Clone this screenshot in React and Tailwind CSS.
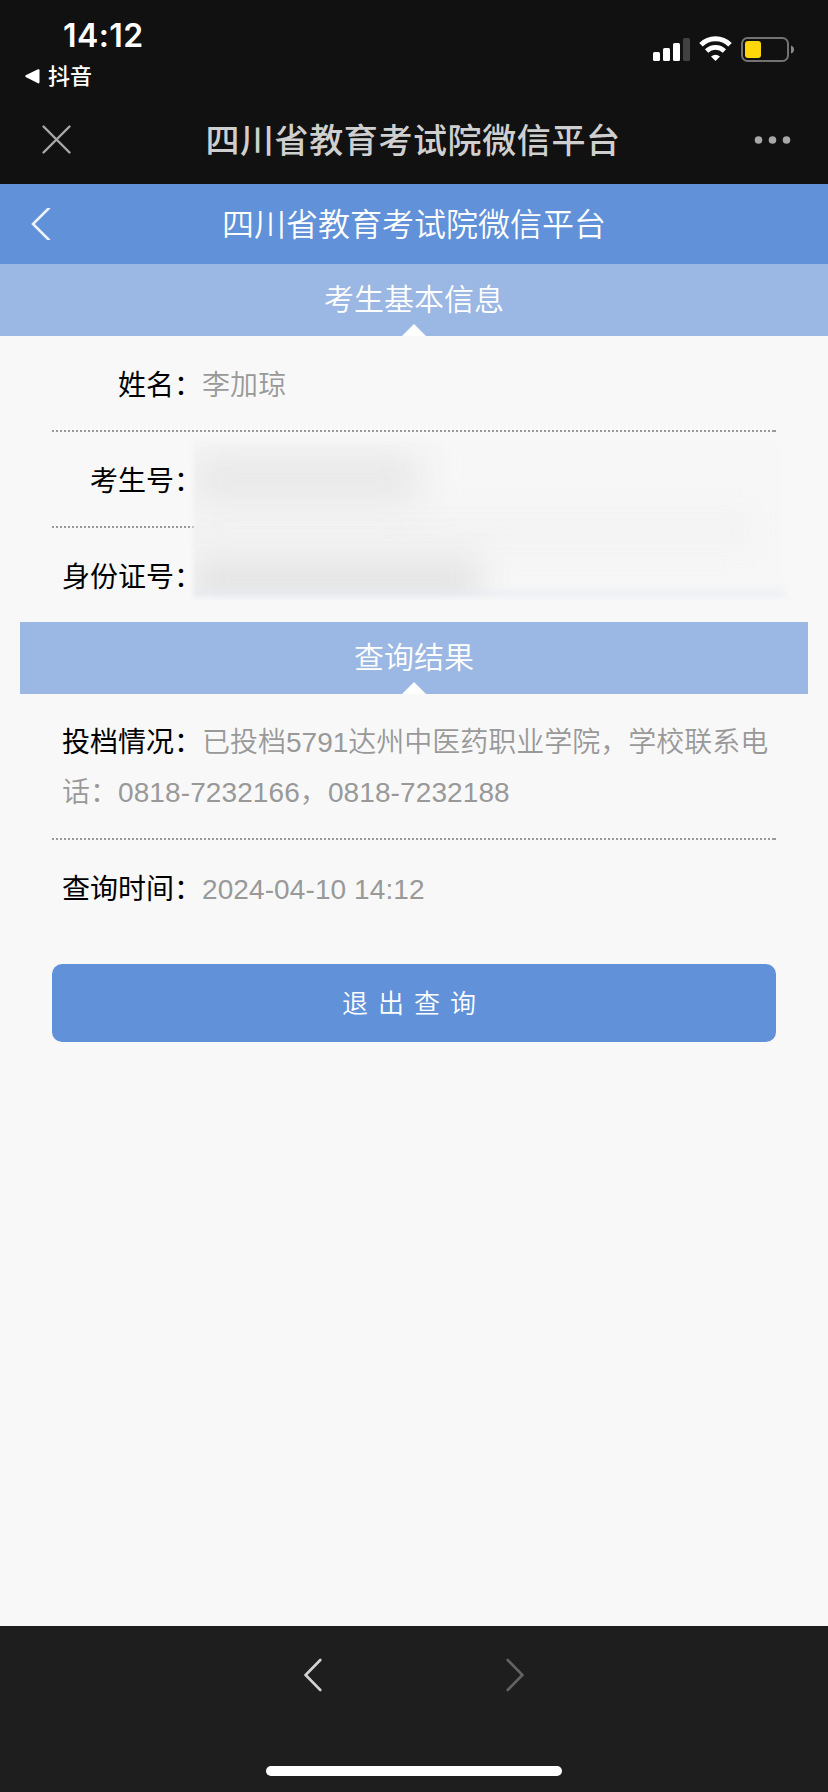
const SANS = "font-['Liberation_Sans','Noto_Sans_CJK_SC',sans-serif]";

function StatusBar() {
  return (
    <div className="flex h-[96px] justify-between bg-[#111111] text-white">
      <div className="flex flex-col pl-[24px]">
        <span className="pt-[16px] pl-[39px] font-['Inter',sans-serif] text-[32px] leading-[40px] font-semibold tracking-[0.4px]">
          14:12
        </span>
        <div className="mt-[4px] flex h-[32px] items-center gap-[8px]">
          <svg width="16" height="16" viewBox="0 0 16 16" fill="#fff">
            <path d="M2.2 7 14 1.3q1.5-.5 1.5 1v12q0 1.500-1.500 1L2.200 9.300q-2-1.150 0-2.300z" />
          </svg>
          <span className="pt-[2px] text-[22px] leading-[32px] font-medium">抖音</span>
        </div>
      </div>
      <svg className="mt-[36px] mr-[34px]" width="142" height="28" viewBox="0 0 142 28">
        <g fill="#fff">
          <rect x="1" y="16" width="7" height="9" rx="1.500" />
          <rect x="11" y="12" width="7" height="13" rx="1.500" />
          <rect x="21" y="7" width="7" height="18" rx="1.500" />
          <rect x="31" y="2" width="7" height="23" rx="1.500" fill="#414141" />
        </g>
        <g fill="none" stroke="#fff">
          <path d="M49 8.800a20.500 20.500 0 0 1 29 0" strokeWidth="5" />
          <path d="M54.600 15a12.700 12.700 0 0 1 17.800 0" strokeWidth="4.600" />
        </g>
        <path d="M59 20.600q4.500-3.600 9 0L63.500 25z" fill="#fff" />
        <rect x="90" y="2" width="46" height="23" rx="5.500" fill="none" stroke="#727272" strokeWidth="2" />
        <rect x="93" y="5" width="16" height="17" rx="3" fill="#ffd60a" />
        <path d="M139 9.500q3 1 3 4t-3 4z" fill="#8a8a8a" />
      </svg>
    </div>
  );
}

function WebTitleBar() {
  return (
    <div className="flex h-[88px] items-center justify-between bg-[#111111] pr-[37px] pl-[41px]">
      <svg className="-mt-[1px]" width="31" height="31" viewBox="0 0 31 31" stroke="#a8a8a8" strokeWidth="2.400" strokeLinecap="round">
        <path d="M2.500 2.500 28.500 28.500M28.500 2.500 2.500 28.500" />
      </svg>
      <h1 className="pt-[1px] text-[34px] leading-[48px] font-medium tracking-[0.600px] text-[#cfcfcf]">
        四川省教育考试院微信平台
      </h1>
      <svg width="37" height="10" viewBox="0 0 37 10" fill="#a8a8a8">
        <circle cx="4.500" cy="5" r="3.800" />
        <circle cx="18.500" cy="5" r="3.800" />
        <circle cx="32.500" cy="5" r="3.800" />
      </svg>
    </div>
  );
}

function SectionBanner({ children }) {
  return (
    <div className="relative flex h-[72px] items-center justify-center bg-[#9bb7e3] text-[30px] leading-[44px] font-[350] text-white">
      <span>{children}</span>
      <svg className="absolute bottom-0 left-1/2 -translate-x-1/2" width="24" height="12" viewBox="0 0 24 12">
        <path d="M0 12 12 0 24 12z" fill="#fff" />
      </svg>
    </div>
  );
}

function DottedLine() {
  return (
    <div className="h-[2px] border-r-2 border-[#999] bg-[repeating-linear-gradient(to_right,#999_0_2px,transparent_2px_4px)]" />
  );
}

function Row({ label, value }) {
  return (
    <div className="flex h-[94px] items-center pt-[5px] pl-[10px]">
      <span className="w-[140px] text-right whitespace-nowrap text-black">{label}：</span>
      <span className="font-[350] tracking-[0.1px] text-[#999999]">{value}</span>
    </div>
  );
}

function MaskedArea() {
  return (
    <div className="absolute top-[98px] left-[190px] h-[167px] w-[602px] overflow-hidden bg-[#f7f7f7] [mask-image:linear-gradient(to_right,transparent,#000_6px,#000_590px,transparent),linear-gradient(to_bottom,transparent,#000_12px,#000_160px,transparent)] [mask-composite:intersect]">
      <div className="absolute top-[78px] left-[-20px] h-[38px] w-[580px] bg-[#f3f3f3] blur-[12px]" />
      <div className="absolute top-[20px] left-[0px] h-[50px] w-[230px] bg-[#e8e8e8] blur-[18px]" />
      <div className="absolute top-[122px] left-[0px] h-[60px] w-[290px] bg-[#e5e5e5] blur-[17px]" />
      <div className="absolute top-[156px] left-[-10px] h-[20px] w-[610px] bg-[#e9ecf3] opacity-70 blur-[4px]" />
    </div>
  );
}

export default function App() {
  return (
    <div className={`flex h-[1792px] w-[828px] flex-col bg-[#f8f8f8] ${SANS}`}>
      <StatusBar />
      <WebTitleBar />
      <header className="flex h-[80px] items-center bg-[#6091d9] pr-[51px] pl-[31px]">
        <svg width="20" height="32" viewBox="0 0 20 32" fill="none" stroke="#eef3fb" strokeWidth="2.600">
          <path d="M18.500 -0.500 2 16 18.500 32.500" />
        </svg>
        <h2 className="flex-1 pt-[2px] text-center text-[32px] leading-[46px] font-[350] text-white">
          四川省教育考试院微信平台
        </h2>
      </header>
      <SectionBanner>考生基本信息</SectionBanner>
      <main className="flex-1 text-[28px] leading-[50px]">
        <section className="relative h-[286px] px-[52px]">
          <Row label="姓名" value="李加琼" />
          <DottedLine />
          <Row label="考生号" value="" />
          <DottedLine />
          <Row label="身份证号" value="" />
          <MaskedArea />
        </section>
        <section className="px-[20px]">
          <SectionBanner>查询结果</SectionBanner>
          <div className="px-[32px]">
            <p className="h-[144px] pt-[24px] pr-[4px] pl-[10px] font-[350] break-all text-[#999999]">
              <span className="inline-block font-normal text-black">投档情况：</span>
              已投档5791达州中医药职业学院，学校联系电话：
              <span className="tracking-[0.1px]">0818-7232166，0818-7232188</span>
            </p>
            <DottedLine />
            <Row label="查询时间" value="2024-04-10 14:12" />
            <button className="mt-[30px] flex h-[78px] w-full items-center justify-center rounded-[10px] bg-[#6091d9] pt-[2px] text-[26px] leading-[40px] font-[350] tracking-[10px] text-white">
              退出查询
            </button>
          </div>
        </section>
      </main>
      <footer className="flex h-[166px] flex-col items-center justify-between bg-[#1e1e1e] pt-[32px] pb-[16px]">
        <nav className="flex w-[220px] justify-between">
          <svg width="18" height="34" viewBox="0 0 18 34" fill="none" stroke="#d2d2d2" strokeWidth="2.600" strokeLinecap="round">
            <path d="M16.300 2 1.600 17 16.300 32" />
          </svg>
          <svg width="18" height="34" viewBox="0 0 18 34" fill="none" stroke="#626262" strokeWidth="2.600" strokeLinecap="round">
            <path d="M1.700 2 16.400 17 1.700 32" />
          </svg>
        </nav>
        <div className="h-[10px] w-[296px] rounded-full bg-white" />
      </footer>
    </div>
  );
}
